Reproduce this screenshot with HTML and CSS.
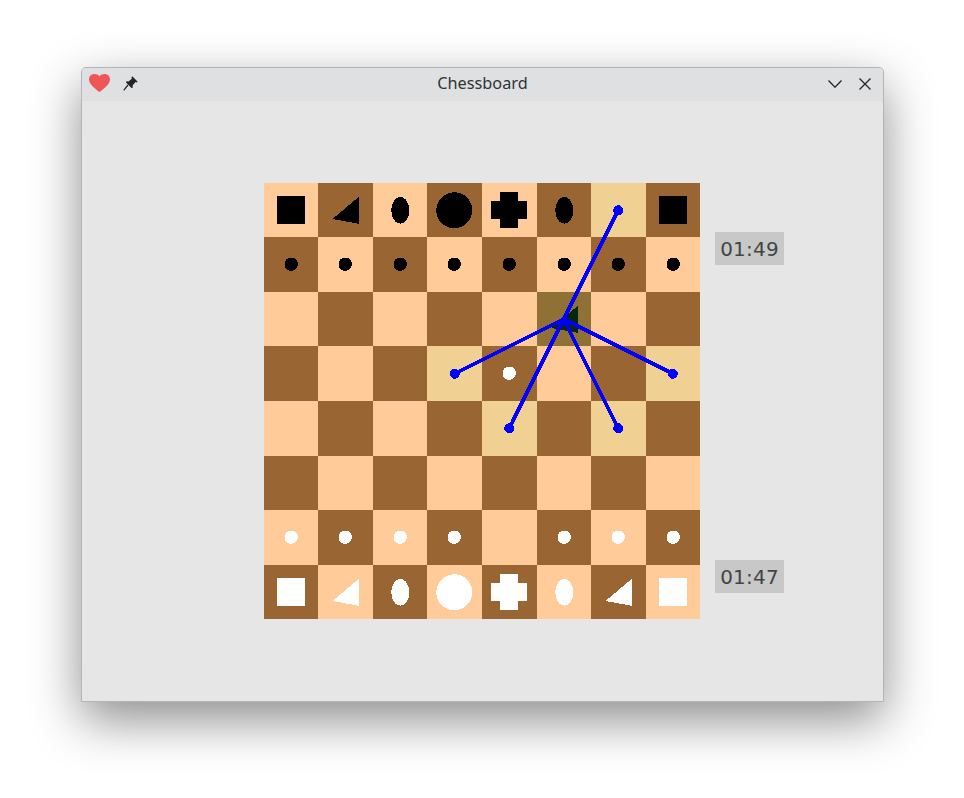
FILE: index.html
```html
<!DOCTYPE html>
<html lang="en">
<head>
    <meta charset="UTF-8">
    <title>Chessboard</title>
    <link rel="stylesheet" href="styles.css">
</head>
<body>
    <!-- piece shapes, 54.5 box same as a board cell -->
    <svg class="defs" width="0" height="0">
        <symbol id="pawn" viewBox="0 0 54.5 54.5"><circle cx="27.25" cy="27.25" r="6.7"/></symbol>
        <symbol id="rook" viewBox="0 0 54.5 54.5"><rect x="13" y="13" width="28" height="28"/></symbol>
        <symbol id="knight" viewBox="0 0 54.5 54.5"><polygon points="14.5,36 40.5,14 40.5,40.7"/></symbol>
        <symbol id="bishop" viewBox="0 0 54.5 54.5"><ellipse cx="27.25" cy="27.25" rx="9" ry="13.3"/></symbol>
        <symbol id="queen" viewBox="0 0 54.5 54.5"><circle cx="27.25" cy="27.25" r="18"/></symbol>
        <symbol id="king" viewBox="0 0 54.5 54.5"><polygon points="18,9 36,9 36,18 45,18 45,36 36,36 36,45 18,45 18,36 9,36 9,18 18,18"/></symbol>
    </svg>

    <div class="window">
        <header class="titlebar">
            <div class="title-left">
                <svg class="heart" viewBox="0 0 21 18"><path d="M10.5 18C8 15.8 0 10.800 0 5.400 0 2.200 2.300 0 5.400 0c2.200 0 4 .9 5.100 2.300C11.600.9 13.400 0 15.600 0 18.700 0 21 2.200 21 5.400c0 5.400-8 10.400-10.500 12.600z"/></svg>
                <svg class="pin" viewBox="0 0 15 15"><path d="M9.300 0.300 14.700 5.700 13.500 6.600 12.500 6 9.600 9.500 9.800 11.700 8.500 12 3 6.500 3.300 5.300 5.500 5.400 9 2.500 8.400 1.500z"/><path d="M5 9 0.700 14.300" class="pin-needle"/></svg>
            </div>
            <h1 class="title">Chessboard</h1>
            <div class="title-right">
                <svg class="chevron" viewBox="0 0 14 8"><path d="M0.500 0.500 7 7.200 13.500 0.500"/></svg>
                <svg class="close" viewBox="0 0 12 12"><path d="M0.500 0.500 11.500 11.500M11.500 0.500 0.500 11.500"/></svg>
            </div>
        </header>

        <main class="content">
            <div class="board">
                <!-- row 8 -->
                <div class="cell light black"><svg><use href="#rook"/></svg></div>
                <div class="cell dark black"><svg><use href="#knight"/></svg></div>
                <div class="cell light black"><svg><use href="#bishop"/></svg></div>
                <div class="cell dark black"><svg><use href="#queen"/></svg></div>
                <div class="cell light black"><svg><use href="#king"/></svg></div>
                <div class="cell dark black"><svg><use href="#bishop"/></svg></div>
                <div class="cell target"></div>
                <div class="cell dark black"><svg><use href="#rook"/></svg></div>
                <!-- row 7 -->
                <div class="cell dark black"><svg><use href="#pawn"/></svg></div>
                <div class="cell light black"><svg><use href="#pawn"/></svg></div>
                <div class="cell dark black"><svg><use href="#pawn"/></svg></div>
                <div class="cell light black"><svg><use href="#pawn"/></svg></div>
                <div class="cell dark black"><svg><use href="#pawn"/></svg></div>
                <div class="cell light black"><svg><use href="#pawn"/></svg></div>
                <div class="cell dark black"><svg><use href="#pawn"/></svg></div>
                <div class="cell light black"><svg><use href="#pawn"/></svg></div>
                <!-- row 6 -->
                <div class="cell light"></div>
                <div class="cell dark"></div>
                <div class="cell light"></div>
                <div class="cell dark"></div>
                <div class="cell light"></div>
                <div class="cell selected"><svg><use href="#knight"/></svg></div>
                <div class="cell light"></div>
                <div class="cell dark"></div>
                <!-- row 5 -->
                <div class="cell dark"></div>
                <div class="cell light"></div>
                <div class="cell dark"></div>
                <div class="cell target"></div>
                <div class="cell dark white"><svg><use href="#pawn"/></svg></div>
                <div class="cell light"></div>
                <div class="cell dark"></div>
                <div class="cell target"></div>
                <!-- row 4 -->
                <div class="cell light"></div>
                <div class="cell dark"></div>
                <div class="cell light"></div>
                <div class="cell dark"></div>
                <div class="cell target"></div>
                <div class="cell dark"></div>
                <div class="cell target"></div>
                <div class="cell dark"></div>
                <!-- row 3 -->
                <div class="cell dark"></div>
                <div class="cell light"></div>
                <div class="cell dark"></div>
                <div class="cell light"></div>
                <div class="cell dark"></div>
                <div class="cell light"></div>
                <div class="cell dark"></div>
                <div class="cell light"></div>
                <!-- row 2 -->
                <div class="cell light white"><svg><use href="#pawn"/></svg></div>
                <div class="cell dark white"><svg><use href="#pawn"/></svg></div>
                <div class="cell light white"><svg><use href="#pawn"/></svg></div>
                <div class="cell dark white"><svg><use href="#pawn"/></svg></div>
                <div class="cell light"></div>
                <div class="cell dark white"><svg><use href="#pawn"/></svg></div>
                <div class="cell light white"><svg><use href="#pawn"/></svg></div>
                <div class="cell dark white"><svg><use href="#pawn"/></svg></div>
                <!-- row 1 -->
                <div class="cell dark white"><svg><use href="#rook"/></svg></div>
                <div class="cell light white"><svg><use href="#knight"/></svg></div>
                <div class="cell dark white"><svg><use href="#bishop"/></svg></div>
                <div class="cell light white"><svg><use href="#queen"/></svg></div>
                <div class="cell dark white"><svg><use href="#king"/></svg></div>
                <div class="cell light white"><svg><use href="#bishop"/></svg></div>
                <div class="cell dark white"><svg><use href="#knight"/></svg></div>
                <div class="cell light white"><svg><use href="#rook"/></svg></div>

                <!-- possible moves of the selected knight -->
                <svg class="moves" viewBox="0 0 436 436">
                    <line x1="299.750" y1="136.250" x2="354.250" y2="27.250"/>
                    <line x1="299.750" y1="136.250" x2="190.750" y2="190.750"/>
                    <line x1="299.750" y1="136.250" x2="408.750" y2="190.750"/>
                    <line x1="299.750" y1="136.250" x2="245.250" y2="245.250"/>
                    <line x1="299.750" y1="136.250" x2="354.250" y2="245.250"/>
                    <circle cx="354.250" cy="27.250" r="5"/>
                    <circle cx="190.750" cy="190.750" r="5"/>
                    <circle cx="408.750" cy="190.750" r="5"/>
                    <circle cx="245.250" cy="245.250" r="5"/>
                    <circle cx="354.250" cy="245.250" r="5"/>
                </svg>
            </div>
            <div class="clocks">
                <div class="clock">01:49</div>
                <div class="clock">01:47</div>
            </div>
        </main>
    </div>
</body>
</html>
```

FILE: styles.css
```css
html, body {
    height: 100%;
}

body {
    margin: 0;
    padding: 67px 0 0 81px;
    box-sizing: border-box;
    background-color: #fff;
    overflow: hidden;
    font-family: "Noto Sans", sans-serif;
}

.defs {
    display: block;
}

.window {
    width: 803px;
    height: 635px;
    box-sizing: border-box;
    border: 1px solid #b4b4b4;
    border-radius: 5px 5px 0 0;
    background-color: #e6e6e6;
    box-shadow: 0 18px 50px rgba(0, 0, 0, 0.45);
}

.titlebar {
    display: grid;
    grid-template-columns: 1fr auto 1fr;
    align-items: center;
    height: 33px;
    background-color: #dfe0e2;
    border-radius: 4px 4px 0 0;
}

.title {
    margin: 0 0 3px;
    font-size: 16.3px;
    font-weight: 400;
    line-height: 22px;
    color: #2e3436;
}

.title-left {
    display: flex;
    align-items: center;
    padding: 0 0 2px 7px;
    gap: 13px;
}

.title-right {
    display: flex;
    align-items: center;
    justify-content: flex-end;
    padding: 0 12px 2px 0;
    gap: 17px;
}

.heart {
    width: 21px;
    height: 18px;
    margin-bottom: 1px;
    fill: #f05558;
}

.pin {
    width: 15px;
    height: 15px;
    fill: #232629;
}

.pin-needle {
    fill: none;
    stroke: #232629;
    stroke-width: 1.2;
}

.chevron {
    width: 14px;
    height: 8px;
    margin-top: 1px;
}

.close {
    width: 12px;
    height: 12px;
}

.chevron path,
.close path {
    fill: none;
    stroke: #232629;
    stroke-width: 1.300;
}

.content {
    display: flex;
    padding: 82px 0 0 182px;
}

.board {
    position: relative;
    display: grid;
    grid-template-columns: 54px 55px 54px 55px 55px 54px 55px 54px;
    grid-template-rows: 54px 55px 54px 55px 55px 54px 55px 54px;
    width: 436px;
    height: 436px;
}

.cell svg {
    display: block;
    width: 54.5px;
    height: 54.5px;
    overflow: visible;
    shape-rendering: crispEdges;
}

.light {
    background-color: #ffcc99;
}

.dark {
    background-color: #996633;
}

.target {
    background-color: #f0d193;
}

.selected {
    background-color: #8f7135;
    fill: #06260e;
}

.black {
    fill: #000;
}

.white {
    fill: #fff;
}

.moves {
    position: absolute;
    left: 0;
    top: 0;
    width: 436px;
    height: 436px;
    shape-rendering: crispEdges;
}

.moves line {
    stroke: #0000ff;
    stroke-width: 3.8;
}

.moves circle {
    fill: #0000ff;
}

.clocks {
    display: flex;
    flex-direction: column;
    justify-content: space-between;
    margin-left: 15px;
    padding: 49px 0 26px;
}

.clock {
    width: 69px;
    height: 33px;
    line-height: 34px;
    text-align: center;
    background-color: #c8c8c8;
    color: #444;
    font-family: "DejaVu Sans", sans-serif;
    font-size: 20px;
    letter-spacing: 0.2px;
}
```
